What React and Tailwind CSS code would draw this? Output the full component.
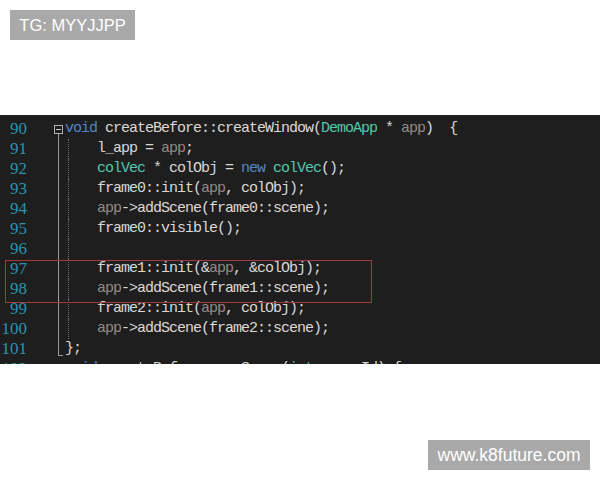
import React from "react";

const D = ({ children }) => <span className="text-[#d8d8d8]">{children}</span>;
const K = ({ children }) => <span className="text-[#4f86cc]">{children}</span>;
const T = ({ children }) => <span className="text-[#4ec9b0]">{children}</span>;
const P = ({ children }) => <span className="text-[#8c8c8c]">{children}</span>;

const Indent = () => (
  <span className="inline-block w-[32px] h-[20px] align-top relative">
    <span className="absolute left-[3px] top-0 h-[20px] border-l border-dotted border-[#6a6a6a]" />
  </span>
);

const lines = [
  { n: "", gutter: "none", code: <D>{"  "}</D> },
  {
    n: 90,
    gutter: "fold",
    code: (
      <>
        <K>void</K>
        <D> createBefore::createWindow(</D>
        <T>DemoApp</T>
        <D> * </D>
        <P>app</P>
        <D>)  {"{"}</D>
      </>
    ),
  },
  { n: 91, gutter: "line", indent: true, code: (<><D>l_app = </D><P>app</P><D>;</D></>) },
  { n: 92, gutter: "line", indent: true, code: (<><T>colVec</T><D> * colObj = </D><K>new</K><D> </D><T>colVec</T><D>();</D></>) },
  { n: 93, gutter: "line", indent: true, code: (<><D>frame0::init(</D><P>app</P><D>, colObj);</D></>) },
  { n: 94, gutter: "line", indent: true, code: (<><P>app</P><D>{"->addScene(frame0::scene);"}</D></>) },
  { n: 95, gutter: "line", indent: true, code: (<><D>frame0::visible();</D></>) },
  { n: 96, gutter: "line", indent: true, code: null },
  { n: 97, gutter: "line", indent: true, code: (<><D>frame1::init(&amp;</D><P>app</P><D>, &amp;colObj);</D></>) },
  { n: 98, gutter: "line", indent: true, code: (<><P>app</P><D>{"->addScene(frame1::scene);"}</D></>) },
  { n: 99, gutter: "line", indent: true, code: (<><D>frame2::init(</D><P>app</P><D>, colObj);</D></>) },
  { n: 100, gutter: "line", indent: true, code: (<><P>app</P><D>{"->addScene(frame2::scene);"}</D></>) },
  { n: 101, gutter: "end", code: (<><D>{"};"}</D></>) },
  {
    n: 102,
    gutter: "fold",
    code: (
      <>
        <K>void</K>
        <D> createBefore::newScene(</D>
        <T>int</T>
        <D> sceneId) {"{"}</D>
      </>
    ),
  },
];

function Gutter({ type }) {
  return (
    <div className="relative w-[38px] h-[20px] shrink-0">
      {type === "fold" && (
        <>
          <div className="absolute left-[27px] top-[6px] w-[9px] h-[9px] border border-[#b0b0b0] flex items-center justify-center">
            <div className="w-[5px] h-px bg-[#c8c8c8]" />
          </div>
          <div className="absolute left-[31px] top-[15px] h-[5px] border-l border-[#9a9a9a]" />
        </>
      )}
      {type === "line" && (
        <div className="absolute left-[31px] top-0 h-[20px] border-l border-[#9a9a9a]" />
      )}
      {type === "end" && (
        <>
          <div className="absolute left-[31px] top-0 h-[17px] border-l border-[#9a9a9a]" />
          <div className="absolute left-[31px] top-[16px] w-[5px] border-t border-[#9a9a9a]" />
        </>
      )}
    </div>
  );
}

export default function App() {
  return (
    <div className="relative w-[600px] h-[480px] bg-white overflow-hidden">
      <div className="absolute left-[10px] top-[10px] h-[30px] w-[125px] bg-[#a9a9a9] flex items-center justify-center text-white text-[16.5px] font-['Liberation_Sans',Arial,sans-serif]">
        TG: MYYJJPP
      </div>

      <div className="mt-[115px] h-[249px] bg-[#1e1e1e] overflow-hidden relative">
        <div className="mt-[-16px] font-['Liberation_Mono','Courier_New',monospace] text-[15px] tracking-[-1px]">
          {lines.map((l, i) => (
            <div key={i} className="flex h-[20px] leading-[20px] whitespace-pre">
              <div className="w-[27px] shrink-0 text-right text-[#2b91af] font-['Liberation_Serif','Times_New_Roman',serif] text-[17px] tracking-normal">
                {l.n}
              </div>
              <Gutter type={l.gutter} />
              <div className="flex-1">
                {l.indent && <Indent />}
                {l.code}
              </div>
            </div>
          ))}
        </div>
        <div className="absolute left-[5px] top-[145px] w-[367px] h-[43px] border border-[#a33a3a]" />
      </div>

      <div className="absolute left-[428px] top-[440px] h-[30px] w-[162px] bg-[#a9a9a9] flex items-center justify-center text-white text-[17.5px] font-['Liberation_Sans',Arial,sans-serif]">
        www.k8future.com
      </div>
    </div>
  );
}
